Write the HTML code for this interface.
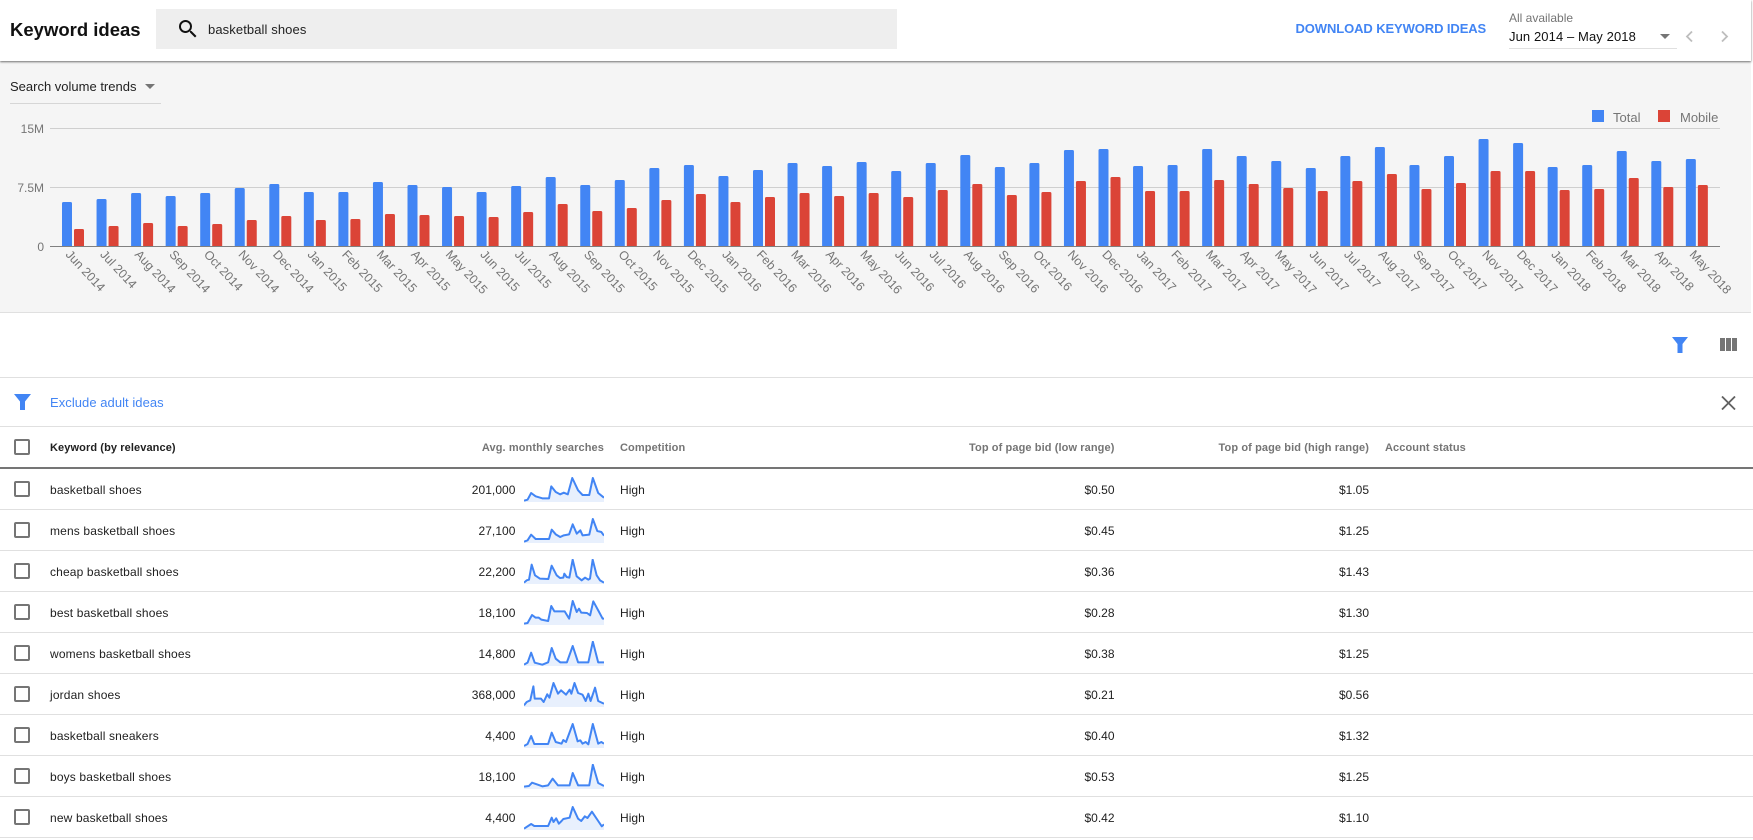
<!DOCTYPE html>
<html><head><meta charset="utf-8"><title>Keyword ideas</title>
<style>
html,body{margin:0;padding:0;background:#fff;width:1753px;height:840px;overflow:hidden}
body{font-family:"Liberation Sans",Arial,sans-serif;color:#212121;font-size:12px;position:relative}
.t{position:absolute;white-space:nowrap}
.hd{position:absolute;left:0;top:0;width:1751px;height:61px;background:#fff;box-shadow:0 1px 2px rgba(0,0,0,.55);z-index:2}
.gray{position:absolute;left:0;top:61px;width:1751px;height:251px;background:#f5f5f5;border-bottom:1px solid #e0e0e0}
.line{position:absolute;left:0;width:1753px;height:1px;background:#e0e0e0}
.row{position:absolute;left:0;width:1753px;height:40px;border-bottom:1px solid #e0e0e0;line-height:42px}
.row .t{top:0}
.k{letter-spacing:.15px}
.cb{position:absolute;left:14px;width:12px;height:12px;border:2px solid #757575;border-radius:2px}
.row .cb{top:12px}
.k{left:50px}
.n{right:1237.5px;letter-spacing:.05px}
.c{left:620px;letter-spacing:.05px}
.l{right:638.5px}
.h{right:384px}
.row svg{position:absolute;left:524px;top:8px}
.th{font-weight:bold;color:#757575;font-size:11px;top:427px;line-height:42px;letter-spacing:.1px}
polygon{fill:#e8f0fd;stroke:none}
polyline{fill:none;stroke:#4285f4;stroke-width:2px;vector-effect:non-scaling-stroke;stroke-linejoin:round}
.bars rect{width:10px;height:240px;rx:1.5px}
.al{font-size:12.4px;fill:#757575;font-family:"Liberation Sans",Arial,sans-serif}
</style></head><body>

<div class="hd">
<div class="t" style="left:10px;top:18px;font-size:18.500px;font-weight:bold;line-height:24px;color:#111">Keyword ideas</div>
<div style="position:absolute;left:156px;top:9px;width:741px;height:40px;background:#eeeeee"></div>
<svg style="position:absolute;left:176px;top:17px" width="24" height="24" viewBox="0 0 24 24"><path fill="#111" d="M15.5 14h-.79l-.28-.27A6.471 6.471 0 0 0 16 9.5 6.5 6.5 0 1 0 9.5 16c1.61 0 3.09-.59 4.23-1.57l.27.28v.79l5 4.99L20.49 19l-4.99-5zm-6 0C7.01 14 5 11.99 5 9.5S7.01 5 9.5 5 14 7.01 14 9.5 11.99 14 9.5 14z"/></svg>
<div class="t" style="left:208px;top:21px;font-size:13px;line-height:18px;color:#222;letter-spacing:.1px">basketball shoes</div>
<div class="t" style="left:1295.500px;top:20px;font-size:13px;font-weight:bold;line-height:18px;color:#4285f4;letter-spacing:-.1px">DOWNLOAD KEYWORD IDEAS</div>
<div class="t" style="left:1509px;top:11px;font-size:12px;line-height:15px;color:#757575">All available</div>
<div class="t" style="left:1509px;top:28px;font-size:13px;line-height:18px;color:#111;letter-spacing:.1px">Jun 2014 – May 2018</div>
<svg style="position:absolute;left:1660px;top:34px" width="10" height="5"><path d="M0 0h10L5 5z" fill="#757575"/></svg>
<div style="position:absolute;left:1509px;top:48px;width:168px;height:1px;background:#e0e0e0"></div>
<svg style="position:absolute;left:1684px;top:30px" width="50" height="13"><path d="M8 1.5 3 6.500 8 11.500" fill="none" stroke="#bdbdbd" stroke-width="1.800"/><path d="M38 1.500 43 6.500 38 11.500" fill="none" stroke="#bdbdbd" stroke-width="1.800"/></svg>
</div>

<div class="gray"></div>
<div class="t" style="left:10px;top:78px;font-size:13px;line-height:18px;color:#222">Search volume trends</div>
<svg style="position:absolute;left:145px;top:84px" width="10" height="5"><path d="M0 0h10L5 5z" fill="#757575"/></svg>
<div style="position:absolute;left:10px;top:103px;width:151px;height:1px;background:#d6d6d6"></div>

<div style="position:absolute;left:1592px;top:110px;width:12px;height:12px;background:#4285f4"></div>
<div class="t" style="left:1613px;top:109px;font-size:13px;line-height:17px;color:#757575">Total</div>
<div style="position:absolute;left:1658px;top:110px;width:12px;height:12px;background:#db4437"></div>
<div class="t" style="left:1680px;top:109px;font-size:13px;line-height:17px;color:#757575">Mobile</div>

<svg style="position:absolute;left:0;top:0" width="1753" height="312" viewBox="0 0 1753 312">
<defs><clipPath id="cp"><rect x="0" y="0" width="1753" height="246.500"/></clipPath></defs>
<text x="44" y="133" text-anchor="end" font-size="12" fill="#757575" font-family="Liberation Sans">15M</text>
<text x="44" y="192" text-anchor="end" font-size="12" fill="#757575" font-family="Liberation Sans">7.5M</text>
<text x="44" y="251" text-anchor="end" font-size="12" fill="#757575" font-family="Liberation Sans">0</text>
<rect x="50" y="128" width="1670" height="1" fill="#cfcfcf"/>
<rect x="50" y="187" width="1670" height="1" fill="#cfcfcf"/>
<g class="bars" clip-path="url(#cp)" fill="#4285f4">
<rect x="62" y="202"/><rect x="96.550" y="199"/><rect x="131.100" y="193"/><rect x="165.650" y="196"/><rect x="200.200" y="193"/><rect x="234.750" y="188"/><rect x="269.300" y="184"/><rect x="303.850" y="192"/><rect x="338.400" y="192"/><rect x="372.950" y="182"/><rect x="407.500" y="185"/><rect x="442.050" y="187"/><rect x="476.600" y="192"/><rect x="511.150" y="186"/><rect x="545.700" y="177"/><rect x="580.250" y="185"/><rect x="614.800" y="180"/><rect x="649.350" y="168"/><rect x="683.900" y="165"/><rect x="718.450" y="176"/><rect x="753" y="170"/><rect x="787.550" y="163"/><rect x="822.100" y="166"/><rect x="856.650" y="162"/><rect x="891.200" y="171"/><rect x="925.750" y="163"/><rect x="960.300" y="155"/><rect x="994.850" y="167"/><rect x="1029.400" y="163"/><rect x="1063.950" y="150"/><rect x="1098.500" y="149"/><rect x="1133.050" y="166"/><rect x="1167.600" y="165"/><rect x="1202.150" y="149"/><rect x="1236.700" y="156"/><rect x="1271.250" y="161"/><rect x="1305.800" y="168"/><rect x="1340.350" y="156"/><rect x="1374.900" y="147"/><rect x="1409.450" y="165"/><rect x="1444" y="156"/><rect x="1478.550" y="139"/><rect x="1513.100" y="143"/><rect x="1547.650" y="167"/><rect x="1582.200" y="165"/><rect x="1616.750" y="151"/><rect x="1651.300" y="161"/><rect x="1685.850" y="159"/>
</g>
<g class="bars" clip-path="url(#cp)" fill="#db4437">
<rect x="74" y="229"/><rect x="108.550" y="226"/><rect x="143.100" y="223"/><rect x="177.650" y="226"/><rect x="212.200" y="224"/><rect x="246.750" y="220"/><rect x="281.300" y="216"/><rect x="315.850" y="220"/><rect x="350.400" y="219"/><rect x="384.950" y="214"/><rect x="419.500" y="215"/><rect x="454.050" y="216"/><rect x="488.600" y="217"/><rect x="523.150" y="212"/><rect x="557.700" y="204"/><rect x="592.250" y="211"/><rect x="626.800" y="208"/><rect x="661.350" y="200"/><rect x="695.900" y="194"/><rect x="730.450" y="202"/><rect x="765" y="197"/><rect x="799.550" y="193"/><rect x="834.100" y="196"/><rect x="868.650" y="193"/><rect x="903.200" y="197"/><rect x="937.750" y="190"/><rect x="972.300" y="184"/><rect x="1006.850" y="195"/><rect x="1041.400" y="192"/><rect x="1075.950" y="181"/><rect x="1110.500" y="177"/><rect x="1145.050" y="191"/><rect x="1179.600" y="191"/><rect x="1214.150" y="180"/><rect x="1248.700" y="184"/><rect x="1283.250" y="188"/><rect x="1317.800" y="191"/><rect x="1352.350" y="181"/><rect x="1386.900" y="174"/><rect x="1421.450" y="189"/><rect x="1456" y="183"/><rect x="1490.550" y="171"/><rect x="1525.100" y="171"/><rect x="1559.650" y="190"/><rect x="1594.200" y="189"/><rect x="1628.750" y="178"/><rect x="1663.300" y="187"/><rect x="1697.850" y="185"/>
</g>
<rect x="50" y="246" width="1670" height="1" fill="#808080"/>
<g class="al">
<text transform="translate(65 255) rotate(47)">Jun 2014</text>
<text transform="translate(99.550 255) rotate(47)">Jul 2014</text>
<text transform="translate(134.100 255) rotate(47)">Aug 2014</text>
<text transform="translate(168.650 255) rotate(47)">Sep 2014</text>
<text transform="translate(203.200 255) rotate(47)">Oct 2014</text>
<text transform="translate(237.750 255) rotate(47)">Nov 2014</text>
<text transform="translate(272.300 255) rotate(47)">Dec 2014</text>
<text transform="translate(306.850 255) rotate(47)">Jan 2015</text>
<text transform="translate(341.400 255) rotate(47)">Feb 2015</text>
<text transform="translate(375.950 255) rotate(47)">Mar 2015</text>
<text transform="translate(410.500 255) rotate(47)">Apr 2015</text>
<text transform="translate(445.050 255) rotate(47)">May 2015</text>
<text transform="translate(479.600 255) rotate(47)">Jun 2015</text>
<text transform="translate(514.150 255) rotate(47)">Jul 2015</text>
<text transform="translate(548.700 255) rotate(47)">Aug 2015</text>
<text transform="translate(583.250 255) rotate(47)">Sep 2015</text>
<text transform="translate(617.800 255) rotate(47)">Oct 2015</text>
<text transform="translate(652.350 255) rotate(47)">Nov 2015</text>
<text transform="translate(686.900 255) rotate(47)">Dec 2015</text>
<text transform="translate(721.450 255) rotate(47)">Jan 2016</text>
<text transform="translate(756 255) rotate(47)">Feb 2016</text>
<text transform="translate(790.550 255) rotate(47)">Mar 2016</text>
<text transform="translate(825.100 255) rotate(47)">Apr 2016</text>
<text transform="translate(859.650 255) rotate(47)">May 2016</text>
<text transform="translate(894.200 255) rotate(47)">Jun 2016</text>
<text transform="translate(928.750 255) rotate(47)">Jul 2016</text>
<text transform="translate(963.300 255) rotate(47)">Aug 2016</text>
<text transform="translate(997.850 255) rotate(47)">Sep 2016</text>
<text transform="translate(1032.400 255) rotate(47)">Oct 2016</text>
<text transform="translate(1066.950 255) rotate(47)">Nov 2016</text>
<text transform="translate(1101.500 255) rotate(47)">Dec 2016</text>
<text transform="translate(1136.050 255) rotate(47)">Jan 2017</text>
<text transform="translate(1170.600 255) rotate(47)">Feb 2017</text>
<text transform="translate(1205.150 255) rotate(47)">Mar 2017</text>
<text transform="translate(1239.700 255) rotate(47)">Apr 2017</text>
<text transform="translate(1274.250 255) rotate(47)">May 2017</text>
<text transform="translate(1308.800 255) rotate(47)">Jun 2017</text>
<text transform="translate(1343.350 255) rotate(47)">Jul 2017</text>
<text transform="translate(1377.900 255) rotate(47)">Aug 2017</text>
<text transform="translate(1412.450 255) rotate(47)">Sep 2017</text>
<text transform="translate(1447 255) rotate(47)">Oct 2017</text>
<text transform="translate(1481.550 255) rotate(47)">Nov 2017</text>
<text transform="translate(1516.100 255) rotate(47)">Dec 2017</text>
<text transform="translate(1550.650 255) rotate(47)">Jan 2018</text>
<text transform="translate(1585.200 255) rotate(47)">Feb 2018</text>
<text transform="translate(1619.750 255) rotate(47)">Mar 2018</text>
<text transform="translate(1654.300 255) rotate(47)">Apr 2018</text>
<text transform="translate(1688.850 255) rotate(47)">May 2018</text>
</g>
</svg>

<svg style="position:absolute;left:1672px;top:337px" width="16" height="16" viewBox="0 0 16 16"><path d="M0 0H16L10.500 7V16H5.500V7z" fill="#4285f4"/></svg>
<svg style="position:absolute;left:1720px;top:338px" width="17" height="13" viewBox="0 0 17 13"><path d="M0 0h5v13H0zM6 0h5v13H6zM12 0h5v13h-5z" fill="#757575"/></svg>
<div class="line" style="top:377px"></div>
<svg style="position:absolute;left:13.500px;top:394px" width="17" height="16" viewBox="0 0 17 16"><path d="M0 0H17L11 7.500V16H6V7.500z" fill="#4285f4"/></svg>
<div class="t" style="left:50px;top:394px;font-size:13px;line-height:17px;color:#4285f4;letter-spacing:.05px">Exclude adult ideas</div>
<svg style="position:absolute;left:1721px;top:396px" width="15" height="14" viewBox="0 0 15 14"><path d="M1 0.500 14 13.500M14 0.500 1 13.500" stroke="#616161" stroke-width="1.800" fill="none"/></svg>
<div class="line" style="top:426px"></div>

<div class="cb" style="top:439px"></div>
<div class="t th" style="left:50px;color:#212121">Keyword (by relevance)</div>
<div class="t th" style="right:1149px">Avg. monthly searches</div>
<div class="t th" style="left:620px">Competition</div>
<div class="t th" style="right:638.500px">Top of page bid (low range)</div>
<div class="t th" style="right:384px">Top of page bid (high range)</div>
<div class="t th" style="left:1385px">Account status</div>
<div style="position:absolute;left:0;top:467px;width:1753px;height:2px;background:#757575"></div>

<div class="row" style="top:469px"><div class="cb"></div><div class="t k">basketball shoes</div><div class="t n">201,000</div>
<svg width="80" height="25" viewBox="1174 470 179 75" preserveAspectRatio="none"><polygon points="1174,545 1174,541 1182,538 1190,518 1200,528 1215,534 1230,534 1235,498 1245,515 1255,522 1263,517 1272,522 1282,473 1295,510 1305,524 1320,524 1328,473 1340,518 1353,532 1353,545"/><polyline points="1174,541 1182,538 1190,518 1200,528 1215,534 1230,534 1235,498 1245,515 1255,522 1263,517 1272,522 1282,473 1295,510 1305,524 1320,524 1328,473 1340,518 1353,532"/></svg>
<div class="t c">High</div><div class="t l">$0.50</div><div class="t h">$1.05</div></div>

<div class="row" style="top:510px"><div class="cb"></div><div class="t k">mens basketball shoes</div><div class="t n">27,100</div>
<svg width="80" height="25" viewBox="1174 593 179 75" preserveAspectRatio="none"><polygon points="1174,668 1174,664 1182,660 1190,643 1200,656 1230,656 1236,628 1245,642 1255,650 1263,645 1275,642 1283,612 1292,640 1300,630 1305,645 1320,643 1328,596 1338,632 1347,635 1353,646 1353,668"/><polyline points="1174,664 1182,660 1190,643 1200,656 1230,656 1236,628 1245,642 1255,650 1263,645 1275,642 1283,612 1292,640 1300,630 1305,645 1320,643 1328,596 1338,632 1347,635 1353,646"/></svg>
<div class="t c">High</div><div class="t l">$0.45</div><div class="t h">$1.25</div></div>

<div class="row" style="top:551px"><div class="cb"></div><div class="t k">cheap basketball shoes</div><div class="t n">22,200</div>
<svg width="80" height="25" viewBox="192 266 240 75" preserveAspectRatio="none"><polygon points="192,341 192,337 200,330 207,328 215,283 225,315 240,325 265,326 275,286 290,315 300,323 310,322 313,310 320,320 328,322 338,268 350,318 365,330 375,322 385,328 390,325 398,268 410,315 420,330 432,337 432,341"/><polyline points="192,337 200,330 207,328 215,283 225,315 240,325 265,326 275,286 290,315 300,323 310,322 313,310 320,320 328,322 338,268 350,318 365,330 375,322 385,328 390,325 398,268 410,315 420,330 432,337"/></svg>
<div class="t c">High</div><div class="t l">$0.36</div><div class="t h">$1.43</div></div>

<div class="row" style="top:592px"><div class="cb"></div><div class="t k">best basketball shoes</div><div class="t n">18,100</div>
<svg width="80" height="25" viewBox="1174 59 179 75" preserveAspectRatio="none"><polygon points="1174,134 1174,130 1182,128 1192,104 1200,112 1207,112 1213,118 1228,122 1235,77 1242,93 1265,93 1275,115 1283,62 1292,95 1297,85 1302,97 1315,98 1322,105 1329,63 1342,95 1350,115 1353,115 1353,134"/><polyline points="1174,130 1182,128 1192,104 1200,112 1207,112 1213,118 1228,122 1235,77 1242,93 1265,93 1275,115 1283,62 1292,95 1297,85 1302,97 1315,98 1322,105 1329,63 1342,95 1350,115 1353,115"/></svg>
<div class="t c">High</div><div class="t l">$0.28</div><div class="t h">$1.30</div></div>

<div class="row" style="top:633px"><div class="cb"></div><div class="t k">womens basketball shoes</div><div class="t n">14,800</div>
<svg width="80" height="25" viewBox="1174 182 179 75" preserveAspectRatio="none"><polygon points="1174,257 1174,253 1182,247 1190,217 1198,247 1215,253 1228,246 1236,203 1245,235 1255,246 1270,246 1283,197 1295,246 1318,246 1328,184 1340,246 1353,246 1353,257"/><polyline points="1174,253 1182,247 1190,217 1198,247 1215,253 1228,246 1236,203 1245,235 1255,246 1270,246 1283,197 1295,246 1318,246 1328,184 1340,246 1353,246"/></svg>
<div class="t c">High</div><div class="t l">$0.38</div><div class="t h">$1.25</div></div>

<div class="row" style="top:674px"><div class="cb"></div><div class="t k">jordan shoes</div><div class="t n">368,000</div>
<svg width="80" height="25" viewBox="1174 305 179 75" preserveAspectRatio="none"><polygon points="1174,380 1174,375 1180,365 1188,360 1195,318 1198,355 1212,355 1218,365 1226,342 1231,352 1240,308 1250,340 1257,330 1268,343 1276,328 1280,340 1287,308 1295,338 1305,343 1312,362 1318,340 1323,362 1333,322 1340,362 1353,370 1353,380"/><polyline points="1174,375 1180,365 1188,360 1195,318 1198,355 1212,355 1218,365 1226,342 1231,352 1240,308 1250,340 1257,330 1268,343 1276,328 1280,340 1287,308 1295,338 1305,343 1312,362 1318,340 1323,362 1333,322 1340,362 1353,370"/></svg>
<div class="t c">High</div><div class="t l">$0.21</div><div class="t h">$0.56</div></div>

<div class="row" style="top:715px"><div class="cb"></div><div class="t k">basketball sneakers</div><div class="t n">4,400</div>
<svg width="80" height="25" viewBox="1174 428 179 75" preserveAspectRatio="none"><polygon points="1174,503 1174,497 1182,491 1190,467 1197,491 1228,491 1236,457 1245,485 1258,490 1262,479 1268,485 1283,431 1294,483 1300,480 1305,490 1312,485 1318,492 1328,431 1340,490 1347,485 1353,490 1353,503"/><polyline points="1174,497 1182,491 1190,467 1197,491 1228,491 1236,457 1245,485 1258,490 1262,479 1268,485 1283,431 1294,483 1300,480 1305,490 1312,485 1318,492 1328,431 1340,490 1347,485 1353,490"/></svg>
<div class="t c">High</div><div class="t l">$0.40</div><div class="t h">$1.32</div></div>

<div class="row" style="top:756px"><div class="cb"></div><div class="t k">boys basketball shoes</div><div class="t n">18,100</div>
<svg width="80" height="25" viewBox="1174 551 179 75" preserveAspectRatio="none"><polygon points="1174,626 1174,619 1185,617 1192,607 1205,613 1215,618 1228,615 1238,595 1250,615 1276,615 1283,578 1295,615 1320,615 1328,553 1340,608 1353,617 1353,626"/><polyline points="1174,619 1185,617 1192,607 1205,613 1215,618 1228,615 1238,595 1250,615 1276,615 1283,578 1295,615 1320,615 1328,553 1340,608 1353,617"/></svg>
<div class="t c">High</div><div class="t l">$0.53</div><div class="t h">$1.25</div></div>

<div class="row" style="top:797px"><div class="cb"></div><div class="t k">new basketball shoes</div><div class="t n">4,400</div>
<svg width="80" height="25" viewBox="1174 674 179 75" preserveAspectRatio="none"><polygon points="1174,749 1174,745 1190,731 1197,737 1228,737 1236,712 1240,725 1246,714 1252,730 1258,722 1262,716 1276,712 1283,680 1295,715 1302,722 1310,708 1316,713 1326,694 1340,722 1348,738 1353,732 1353,749"/><polyline points="1174,745 1190,731 1197,737 1228,737 1236,712 1240,725 1246,714 1252,730 1258,722 1262,716 1276,712 1283,680 1295,715 1302,722 1310,708 1316,713 1326,694 1340,722 1348,738 1353,732"/></svg>
<div class="t c">High</div><div class="t l">$0.42</div><div class="t h">$1.10</div></div>

</body></html>
